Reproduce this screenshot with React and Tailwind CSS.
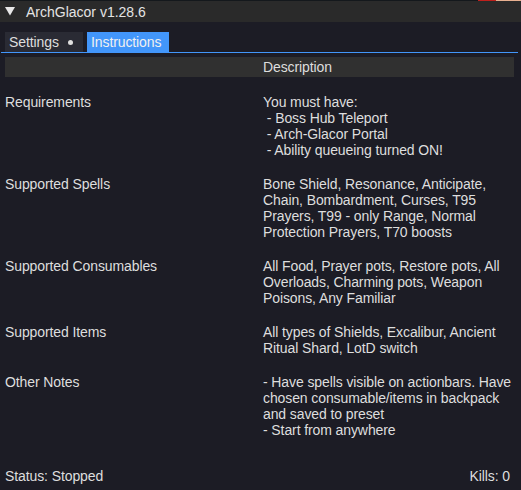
export default function App() {
  const rows = [
    ["Requirements", "You must have:\n - Boss Hub Teleport\n - Arch-Glacor Portal\n - Ability queueing turned ON!"],
    ["Supported Spells", "Bone Shield, Resonance, Anticipate,\nChain, Bombardment, Curses, T95\nPrayers, T99 - only Range, Normal\nProtection Prayers, T70 boosts"],
    ["Supported Consumables", "All Food, Prayer pots, Restore pots, All\nOverloads, Charming pots, Weapon\nPoisons, Any Familiar"],
    ["Supported Items", "All types of Shields, Excalibur, Ancient\nRitual Shard, LotD switch"],
    ["Other Notes", "- Have spells visible on actionbars. Have\nchosen consumable/items in backpack\nand saved to preset\n- Start from anywhere"],
  ];
  return (
    <div
      className="w-[521px] h-[490px] bg-[#1c1c25] flex flex-col overflow-hidden text-[14px] leading-[16px] tracking-[-0.1px] text-[#dedede]"
      style={{ fontFamily: '"Liberation Sans", Arial, sans-serif' }}
    >
      <div className="h-px flex shrink-0">
        <div className="w-[478px] bg-[#14181c]" />
        <div className="w-[18px] bg-[#c0201c]" />
        <div className="flex-1 bg-[#e8b090]" />
      </div>
      <div className="h-[21px] shrink-0 bg-[#2a2a2a] flex items-center">
        <svg width="10" height="9" viewBox="0 0 10 9" className="ml-[5px]">
          <polygon points="0,0 10,0 5,8.5" fill="#e8e8e8" />
        </svg>
        <span className="ml-[11px] text-[#e4e4e4] tracking-normal">ArchGlacor v1.28.6</span>
      </div>
      <div className="mt-[10px] h-[20px] shrink-0 flex gap-[4px] px-[5px]">
        <div className="w-[78px] bg-[#2a2b34] flex items-center pl-[4px] relative">
          <span>Settings</span>
          <span className="absolute left-[63px] top-[8px] w-[5px] h-[5px] rounded-full bg-[#e0e0e0]" />
        </div>
        <div className="w-[82px] bg-[#4296fa] flex items-center pl-[4px] text-[#f0f0f0]">Instructions</div>
      </div>
      <div className="h-px shrink-0 ml-[1px] mr-[3px] bg-[#4296fa]" />
      <div className="mt-[4px] ml-[5px] w-[509px] h-[20px] shrink-0 bg-[#303030] grid grid-cols-[253px_1fr] items-center">
        <div />
        <div className="pl-[5px]">Description</div>
      </div>
      <div className="mt-[17px] ml-[5px] w-[509px] grid grid-cols-[253px_1fr]">
        {rows.map(([k, v]) => (
          <div key={k} className="contents">
            <div className="pb-[18px]">{k}</div>
            <div className="pl-[5px] pb-[18px] whitespace-pre">{v}</div>
          </div>
        ))}
      </div>
      <div className="flex-1" />
      <div className="flex justify-between px-[5px] pb-[6px] pr-[11px]">
        <span>Status: Stopped</span>
        <span>Kills: 0</span>
      </div>
    </div>
  );
}
